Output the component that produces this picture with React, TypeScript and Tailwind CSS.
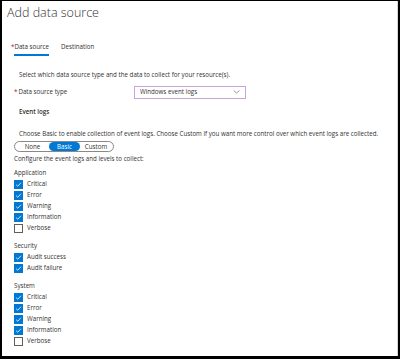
import React from 'react';

const font = { fontFamily: '"Open Sans", "Liberation Sans", sans-serif' };

const Check = ({ checked }: { checked: boolean }) =>
  checked ? (
    <span className="w-[9px] h-[9px] bg-[#0078d4] flex items-center justify-center shrink-0">
      <svg width="7" height="7" viewBox="0 0 8 8" fill="none">
        <path d="M1.3 4.2 L3.2 6 L6.8 2" stroke="#fff" strokeWidth="0.9" />
      </svg>
    </span>
  ) : (
    <span className="w-[9px] h-[9px] border border-[#605e5c] bg-white shrink-0" />
  );

const Group = ({ title, items }: { title: string; items: [string, boolean][] }) => (
  <div className="flex flex-col">
    <div className="h-[11px] flex items-center">{title}</div>
    {items.map(([label, on]) => (
      <div key={label} className="h-[11px] flex items-center gap-[4px]">
        <Check checked={on} />
        <span>{label}</span>
      </div>
    ))}
  </div>
);

export default function App() {
  const levels: [string, boolean][] = [
    ['Critical', true],
    ['Error', true],
    ['Warning', true],
    ['Information', true],
    ['Verbose', false],
  ];

  return (
    <div
      style={font}
      className="w-[400px] h-[359px] bg-black pt-px pl-[2px] pr-[2px] pb-[3px] text-[#323130]"
    >
      <div className="h-full bg-white border-r border-[#d6d6d6] flex flex-col text-[6.2px] leading-none">
        <h1 className="text-[12.5px] font-light leading-none pl-[5px] pt-[6px]">Add data source</h1>

        {/* Tabs */}
        <div className="flex gap-[12px] pl-[9px] mt-[24px]">
          <div className="flex flex-col">
            <div className="flex">
              <span className="text-[#a4262c]">*</span>
              <span>Data source</span>
            </div>
            <div className="h-[2px] bg-[#0078d4] mt-[4px] ml-[3px]" />
          </div>
          <span>Destination</span>
        </div>

        <div className="pl-[17px] mt-[16px]">
          Select which data source type and the data to collect for your resource(s).
        </div>

        <div className="flex items-center pl-[12px] mt-[8px]">
          <div className="w-[120px] flex">
            <span className="text-[#a4262c]">*</span>
            <span className="ml-[1px]">Data source type</span>
          </div>
          <div className="w-[112px] h-[13px] border border-[#c9a3d9] flex items-center justify-between pl-[5px] pr-[5px]">
            <span>Windows event logs</span>
            <svg width="7" height="4" viewBox="0 0 8 5" fill="none">
              <path d="M0.5 0.5 L4 4 L7.5 0.5" stroke="#605e5c" strokeWidth="0.8" />
            </svg>
          </div>
        </div>

        <div className="pl-[17px] mt-[10px] font-semibold">Event logs</div>

        <div className="pl-[17px] mt-[16px]">
          Choose Basic to enable collection of event logs. Choose Custom if you want more control over which event logs are collected.
        </div>

        <div className="ml-[12px] mt-[4px] w-[100px] h-[11px] border border-[#8a8886] rounded-full flex items-center px-[1px]">
          <span className="w-[33px] text-center">None</span>
          <span className="w-[31px] h-[9px] rounded-full bg-[#0078d4] text-white flex items-center justify-center">Basic</span>
          <span className="flex-1 text-center">Custom</span>
        </div>

        <div className="pl-[12px] mt-[4px]">Configure the event logs and levels to collect:</div>

        <div className="pl-[12px] mt-[5px] flex flex-col">
          <Group title="Application" items={levels} />
          <div className="mt-[7px]">
            <Group title="Security" items={[['Audit success', true], ['Audit failure', true]]} />
          </div>
          <div className="mt-[7px]">
            <Group title="System" items={levels} />
          </div>
        </div>
      </div>
    </div>
  );
}
